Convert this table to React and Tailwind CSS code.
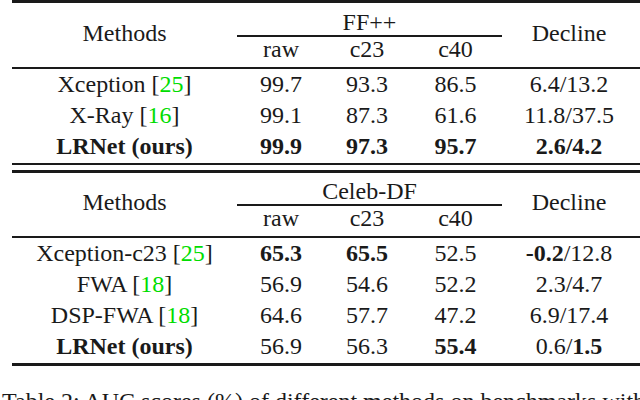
const cite = n => <span className="text-[#00dd00]">{n}</span>

const ffRows = [
  { m: <>Xception [{cite(25)}]</>, v: ['99.7', '93.3', '86.5'], d: '6.4/13.2' },
  { m: <>X-Ray [{cite(16)}]</>, v: ['99.1', '87.3', '61.6'], d: '11.8/37.5' },
  { m: <b>LRNet (ours)</b>, v: [<b>99.9</b>, <b>97.3</b>, <b>95.7</b>], d: <b>2.6/4.2</b> },
]

const celebRows = [
  { m: <>Xception-c23 [{cite(25)}]</>, v: [<b>65.3</b>, <b>65.5</b>, '52.5'], d: <><b>-0.2</b>/12.8</> },
  { m: <>FWA [{cite(18)}]</>, v: ['56.9', '54.6', '52.2'], d: '2.3/4.7' },
  { m: <>DSP-FWA [{cite(18)}]</>, v: ['64.6', '57.7', '47.2'], d: '6.9/17.4' },
  { m: <b>LRNet (ours)</b>, v: ['56.9', '56.3', <b>55.4</b>], d: <>0.6/<b>1.5</b></> },
]

function Header({ title }) {
  return (
    <div className="flex h-[63px]">
      <div className="w-[225px] flex items-center justify-center pb-[5px]">Methods</div>
      <div className="w-[265px] flex flex-col">
        <div className="h-[31px] flex items-end justify-center leading-[26px]">{title}</div>
        <div className="h-[2px] bg-[#1a1a1a]" />
        <div className="h-[30px] flex leading-[24px]">
          <div className="w-[88px] text-center">raw</div>
          <div className="w-[84px] text-center">c23</div>
          <div className="w-[93px] text-center">c40</div>
        </div>
      </div>
      <div className="w-[134px] flex items-center justify-center pb-[5px]">Decline</div>
    </div>
  )
}

function Rows({ rows }) {
  return rows.map((r, i) => (
    <div key={i} className="grid grid-cols-[225px_88px_84px_93px_134px] h-[31px] leading-[31px] text-center">
      <div>{r.m}</div>
      {r.v.map((x, j) => <div key={j}>{x}</div>)}
      <div>{r.d}</div>
    </div>
  ))
}

export default function App() {
  return (
    <div className="w-[640px] h-[400px] overflow-hidden bg-white text-[24px] text-[#1a1a1a] font-['Liberation_Serif',serif]">
      <div className="ml-[12px] w-[628px]">
        <div className="h-[3px] bg-[#1a1a1a]" />
        <div className="mt-[1px]"><Header title="FF++" /></div>
        <div className="h-[2px] bg-[#1a1a1a]" />
        <Rows rows={ffRows} />
        <div className="h-[2px] bg-[#1a1a1a] mt-[1px]" />
        <div className="h-[3px] bg-[#1a1a1a] mt-[5px]" />
        <Header title="Celeb-DF" />
        <div className="h-[2px] bg-[#1a1a1a]" />
        <Rows rows={celebRows} />
        <div className="h-[3px] bg-[#1a1a1a] mt-[1px]" />
      </div>
      <p className="mt-[23px] pl-[2px] leading-[24px] whitespace-nowrap">
        Table 2: AUC scores (%) of different methods on benchmarks with certain
      </p>
    </div>
  )
}
